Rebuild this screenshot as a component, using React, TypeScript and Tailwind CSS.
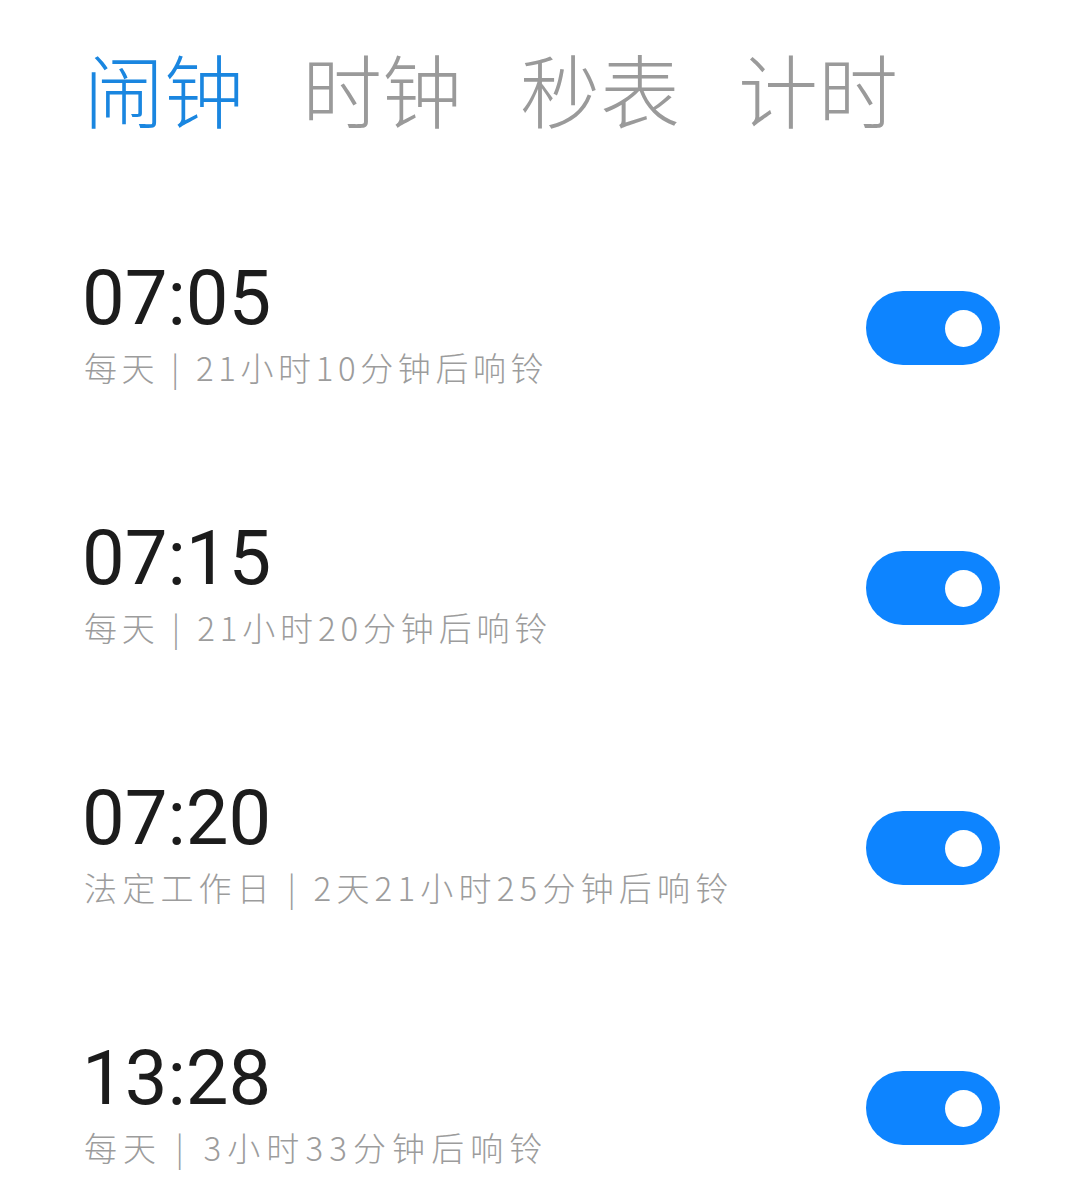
const alarms = [
  { time: '07:05', label: '每天 | 21小时10分钟后响铃', tracking: 'tracking-[4.6px]' },
  { time: '07:15', label: '每天 | 21小时20分钟后响铃', tracking: 'tracking-[4.85px]' },
  { time: '07:20', label: '法定工作日 | 2天21小时25分钟后响铃', tracking: 'tracking-[5.2px]' },
  { time: '13:28', label: '每天 | 3小时33分钟后响铃', tracking: 'tracking-[6.1px]' },
];

const tabs = ['闹钟', '时钟', '秒表', '计时'];

function Toggle() {
  return (
    <div className="mt-[38px] flex h-[74px] w-[134px] items-center justify-end rounded-full bg-[#0d84ff] pr-[18px]">
      <div className="h-[37px] w-[37px] rounded-full bg-white" />
    </div>
  );
}

export default function App() {
  return (
    <div className="h-[1195px] w-[1080px] overflow-hidden bg-white font-['Noto_Sans_CJK_SC','Noto_Sans',sans-serif]">
      <div className="flex gap-[58px] pl-[84px] pt-[32px]">
        {tabs.map((tab, i) => (
          <span
            key={tab}
            className={`text-[80px] font-light leading-[110px] ${i === 0 ? 'text-[#1a86e0]' : 'text-[#9a9a9a]'}`}
          >
            {tab}
          </span>
        ))}
      </div>

      <div className="mt-[111px] flex flex-col gap-[84px] pl-[82px] pr-[80px]">
        {alarms.map((alarm) => (
          <div key={alarm.time} className="flex h-[176px] items-start justify-between">
            <div>
              <div className="font-['Roboto',sans-serif] text-[76px] leading-[90px] text-[#1c1c1c]">{alarm.time}</div>
              <div className={`mt-[2px] ml-[2px] whitespace-nowrap text-[33px] font-light leading-[44px] text-[#9c9c9c] ${alarm.tracking}`}>
                {alarm.label}
              </div>
            </div>
            <Toggle />
          </div>
        ))}
      </div>
    </div>
  );
}
